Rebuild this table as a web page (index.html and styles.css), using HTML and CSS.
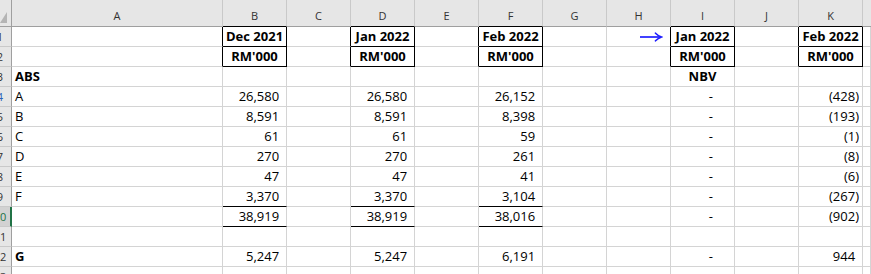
FILE: index.html
```html
<!DOCTYPE html>
<html>
<head>
<meta charset="utf-8">
<link rel="stylesheet" href="styles.css">
</head>
<body>
<div class="sheet">
  <!-- header row -->
  <div class="corner"><span class="tri"></span></div>
  <div class="ch">A</div>
  <div class="ch kBh">B</div>
  <div class="ch">C</div>
  <div class="ch kBh">D</div>
  <div class="ch">E</div>
  <div class="ch kBh">F</div>
  <div class="ch">G</div>
  <div class="ch">H</div>
  <div class="ch kBh">I</div>
  <div class="ch">J</div>
  <div class="ch kBh">K</div>
  <div class="ch last"></div>

  <!-- row 1 -->
  <div class="rh"><span>1</span></div>
  <div class="c kR"></div>
  <div class="c ctr b kR kB">Dec 2021</div>
  <div class="c kR"></div>
  <div class="c ctr b kR kB">Jan 2022</div>
  <div class="c kR"></div>
  <div class="c ctr b kR kB">Feb 2022</div>
  <div class="c"></div>
  <div class="c kR arrowcell"><svg class="arrow" width="24" height="10" viewBox="0 0 24 10"><path d="M1 5 H21.5" stroke="#1f1fff" stroke-width="1.7" fill="none"/><path d="M16.5 1.2 Q19 3.8 22.5 5 Q19 6.2 16.5 8.8" stroke="#1f1fff" stroke-width="1.6" fill="none" stroke-linecap="round"/></svg></div>
  <div class="c ctr b kR kB">Jan 2022</div>
  <div class="c kR"></div>
  <div class="c ctr b kR kB">Feb 2022</div>
  <div class="c"></div>

  <!-- row 2 -->
  <div class="rh"><span>2</span></div>
  <div class="c kR"></div>
  <div class="c ctr b kR kB">RM'000</div>
  <div class="c kR"></div>
  <div class="c ctr b kR kB">RM'000</div>
  <div class="c kR"></div>
  <div class="c ctr b kR kB">RM'000</div>
  <div class="c"></div>
  <div class="c kR"></div>
  <div class="c ctr b kR kB">RM'000</div>
  <div class="c kR"></div>
  <div class="c ctr b kR kB">RM'000</div>
  <div class="c"></div>

  <!-- row 3 -->
  <div class="rh"><span>3</span></div>
  <div class="c lbl b">ABS</div>
  <div class="c"></div>
  <div class="c"></div>
  <div class="c"></div>
  <div class="c"></div>
  <div class="c"></div>
  <div class="c"></div>
  <div class="c"></div>
  <div class="c ctr b">NBV</div>
  <div class="c"></div>
  <div class="c"></div>
  <div class="c"></div>

  <!-- row 4 -->
  <div class="rh"><span class="blue">4</span></div>
  <div class="c lbl">A</div>
  <div class="c num">26,580<span class="ph">)</span></div>
  <div class="c"></div>
  <div class="c num">26,580<span class="ph">)</span></div>
  <div class="c"></div>
  <div class="c num">26,152<span class="ph">)</span></div>
  <div class="c"></div>
  <div class="c"></div>
  <div class="c dash">-</div>
  <div class="c"></div>
  <div class="c num">(428)</div>
  <div class="c"></div>

  <!-- row 5 -->
  <div class="rh"><span>5</span></div>
  <div class="c lbl">B</div>
  <div class="c num">8,591<span class="ph">)</span></div>
  <div class="c"></div>
  <div class="c num">8,591<span class="ph">)</span></div>
  <div class="c"></div>
  <div class="c num">8,398<span class="ph">)</span></div>
  <div class="c"></div>
  <div class="c"></div>
  <div class="c dash">-</div>
  <div class="c"></div>
  <div class="c num">(193)</div>
  <div class="c"></div>

  <!-- row 6 -->
  <div class="rh"><span>6</span></div>
  <div class="c lbl">C</div>
  <div class="c num">61<span class="ph">)</span></div>
  <div class="c"></div>
  <div class="c num">61<span class="ph">)</span></div>
  <div class="c"></div>
  <div class="c num">59<span class="ph">)</span></div>
  <div class="c"></div>
  <div class="c"></div>
  <div class="c dash">-</div>
  <div class="c"></div>
  <div class="c num">(1)</div>
  <div class="c"></div>

  <!-- row 7 -->
  <div class="rh"><span>7</span></div>
  <div class="c lbl">D</div>
  <div class="c num">270<span class="ph">)</span></div>
  <div class="c"></div>
  <div class="c num">270<span class="ph">)</span></div>
  <div class="c"></div>
  <div class="c num">261<span class="ph">)</span></div>
  <div class="c"></div>
  <div class="c"></div>
  <div class="c dash">-</div>
  <div class="c"></div>
  <div class="c num">(8)</div>
  <div class="c"></div>

  <!-- row 8 -->
  <div class="rh"><span>8</span></div>
  <div class="c lbl">E</div>
  <div class="c num">47<span class="ph">)</span></div>
  <div class="c"></div>
  <div class="c num">47<span class="ph">)</span></div>
  <div class="c"></div>
  <div class="c num">41<span class="ph">)</span></div>
  <div class="c"></div>
  <div class="c"></div>
  <div class="c dash">-</div>
  <div class="c"></div>
  <div class="c num">(6)</div>
  <div class="c"></div>

  <!-- row 9 -->
  <div class="rh"><span>9</span></div>
  <div class="c lbl">F</div>
  <div class="c num kB">3,370<span class="ph">)</span></div>
  <div class="c"></div>
  <div class="c num kB">3,370<span class="ph">)</span></div>
  <div class="c"></div>
  <div class="c num kB">3,104<span class="ph">)</span></div>
  <div class="c"></div>
  <div class="c"></div>
  <div class="c dash">-</div>
  <div class="c"></div>
  <div class="c num">(267)</div>
  <div class="c"></div>

  <!-- row 10 -->
  <div class="rh sel"><span>10</span></div>
  <div class="c lbl"></div>
  <div class="c num kB">38,919<span class="ph">)</span></div>
  <div class="c"></div>
  <div class="c num kB">38,919<span class="ph">)</span></div>
  <div class="c"></div>
  <div class="c num kB">38,016<span class="ph">)</span></div>
  <div class="c"></div>
  <div class="c"></div>
  <div class="c dash">-</div>
  <div class="c"></div>
  <div class="c num">(902)</div>
  <div class="c"></div>

  <!-- row 11 -->
  <div class="rh"><span>11</span></div>
  <div class="c"></div>
  <div class="c"></div>
  <div class="c"></div>
  <div class="c"></div>
  <div class="c"></div>
  <div class="c"></div>
  <div class="c"></div>
  <div class="c"></div>
  <div class="c"></div>
  <div class="c"></div>
  <div class="c"></div>
  <div class="c"></div>

  <!-- row 12 -->
  <div class="rh"><span>12</span></div>
  <div class="c lbl b">G</div>
  <div class="c num">5,247<span class="ph">)</span></div>
  <div class="c"></div>
  <div class="c num">5,247<span class="ph">)</span></div>
  <div class="c"></div>
  <div class="c num">6,191<span class="ph">)</span></div>
  <div class="c"></div>
  <div class="c"></div>
  <div class="c dash">-</div>
  <div class="c"></div>
  <div class="c num">944<span class="ph">)</span></div>
  <div class="c"></div>

  <!-- row 13 -->
  <div class="rh"><span>13</span></div>
  <div class="c"></div>
  <div class="c"></div>
  <div class="c"></div>
  <div class="c"></div>
  <div class="c"></div>
  <div class="c"></div>
  <div class="c"></div>
  <div class="c"></div>
  <div class="c"></div>
  <div class="c"></div>
  <div class="c"></div>
  <div class="c"></div>
</div>
</body>
</html>
```

FILE: styles.css
```css
html, body {
  margin: 0;
  padding: 0;
  background: #ffffff;
  overflow: hidden;
}

.sheet {
  display: grid;
  grid-template-columns: 12px 211px repeat(10, 64px) 1fr;
  grid-template-rows: 27px;
  grid-auto-rows: 20px;
  width: 871px;
  height: 274px;
  overflow: hidden;
  font-family: "Open Sans", "Noto Sans", sans-serif;
  font-size: 13px;
  color: #000;
}

.sheet > div {
  box-sizing: border-box;
  overflow: hidden;
  white-space: nowrap;
}

/* column headers */
.corner {
  background: #e6e6e6;
  border-right: 1px solid #9f9f9f;
  border-bottom: 1px solid #9f9f9f;
  display: flex;
  align-items: flex-end;
  padding-bottom: 3px;
}
.tri {
  display: block;
  width: 0;
  height: 0;
  border-left: 7px solid transparent;
  border-bottom: 11px solid #b4b4b4;
}

.ch {
  background: #e6e6e6;
  border-right: 1px solid #c9c9c9;
  border-bottom: 1px solid #9f9f9f;
  color: #333;
  font-size: 11px;
  text-align: center;
  line-height: 14px;
  padding-top: 9px;
}
.ch.kBh { border-bottom-color: #000; }
.ch.last { border-right: none; }

/* row headers */
.rh {
  background: #e6e6e6;
  border-right: 1px solid #9f9f9f;
  border-bottom: 1px solid #c9c9c9;
  color: #333;
  font-size: 11px;
  line-height: 19px;
}
.rh span {
  display: block;
  width: 22px;
  margin-left: -11px;
  text-align: center;
}
.rh span.blue { color: #2b5fb8; }
.rh.sel {
  border-right: 2px solid #217346;
  color: #217346;
  background: #d2d2d2;
}

/* cells */
.c {
  border-right: 1px solid #d4d4d4;
  border-bottom: 1px solid #d4d4d4;
  line-height: 19px;
  padding: 0 3px;
}
.c.kR { border-right-color: #000; }
.c.kB { border-bottom-color: #000; }

.b { font-weight: 700; }
.ctr { text-align: center; }
.lbl { text-align: left; }
.num { text-align: right; padding-right: 3px; }
.dash { text-align: right; padding-right: 21px; }
.ph { visibility: hidden; }

.arrowcell {
  display: flex;
  justify-content: flex-end;
  align-items: center;
  padding-right: 7px;
}
.arrow { display: block; }
```
